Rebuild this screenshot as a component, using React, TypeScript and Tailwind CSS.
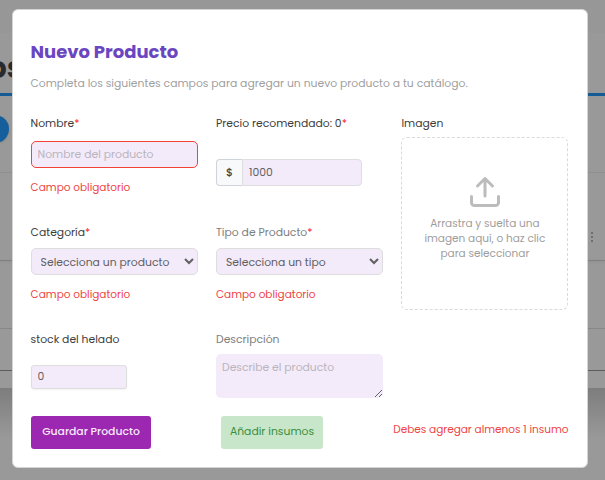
import type { ReactNode } from "react";

function Label({ children, required, className = "text-[#3c3c3c]" }: { children: ReactNode; required?: boolean; className?: string }) {
  return (
    <label className={`block h-[18px] whitespace-nowrap leading-[20px] ${className}`}>
      {children}
      {required && <span className="text-[#ff2020]">*</span>}
    </label>
  );
}

function FieldError() {
  return <p className="h-[18px] whitespace-nowrap text-[10.5px] leading-[20px] text-[#ee4444]">Campo obligatorio</p>;
}

function Backdrop() {
  return (
    <div className="absolute inset-0 bg-[#999999]">
      <div className="absolute inset-x-0 top-0 h-[33px] bg-[#979797]" />
      <div className="absolute -left-[18px] top-[49px] w-[41px] text-right text-[29px] font-bold leading-[38px] text-[#292a2d]">os</div>
      <div className="absolute inset-x-0 top-[93px] h-[3px] bg-[#155b96]" />
      <div className="absolute -left-[19px] top-[115px] size-7 rounded-full bg-[#165f9d] shadow" />
      <div className="absolute inset-x-0 top-[172px] h-px bg-[#8f8f8f]" />
      <div className="absolute inset-x-0 top-[260px] h-px bg-[#808080] shadow" />
      <div className="absolute inset-x-0 top-[328px] h-px bg-[#888888]" />
      <div className="absolute inset-x-0 top-[370px] h-px bg-[#5c5c5c]" />
      <div className="absolute inset-x-0 top-[388px] h-[50px] bg-linear-to-b from-[#7d7d7d] to-[#999999]" />
      <div className="absolute left-[591px] top-[232px] flex flex-col gap-[2px]">
        <i className="size-[2px] bg-[#6e6e6e]" />
        <i className="size-[2px] bg-[#6e6e6e]" />
        <i className="size-[2px] bg-[#6e6e6e]" />
      </div>
    </div>
  );
}

const field = "border bg-[#f3eafa] text-[#606060] outline-none placeholder:text-[#b9b5bd]";

export default function App() {
  return (
    <div className="relative h-[480px] w-[605px] overflow-hidden font-[Poppins,Inter,sans-serif] text-[10.8px]">
      <Backdrop />
      <form className="absolute left-[12px] top-[9px] h-[459px] w-[576px] rounded-[6px] border border-[#d4d4d4] bg-white pl-[18px] pt-[29px]">
        <h1 className="-ml-[0.5px] h-[26px] whitespace-nowrap text-[18px] font-bold leading-[26px] text-[#6b46c1]">Nuevo Producto</h1>
        <p className="-ml-[0.5px] mt-[9px] h-[18px] whitespace-nowrap leading-[20px] text-[#a0a0a0]">
          Completa los siguientes campos para agregar un nuevo producto a tu catálogo.
        </p>
        <div className="-ml-[0.4px] mt-[22px] grid grid-cols-[167px_167px_167px] gap-x-[18.4px]">
          <div className="h-[109px]">
            <Label required>Nombre</Label>
            <input placeholder="Nombre del producto" className={`${field} mt-[9px] block h-[27px] w-full rounded-[5px] border-[#f44336] px-[6px]`} />
            <div className="mt-[10px]"><FieldError /></div>
          </div>
          <div>
            <Label required>Precio recomendado: 0</Label>
            <div className="mt-[27px] flex h-[27px] w-[146px]">
              <span className="flex w-[26px] items-center justify-center rounded-l-[4px] border border-r-0 border-[#ced4da] bg-[#f8f9fa] pt-px font-medium text-[#4d4336]">$</span>
              <input defaultValue="1000" className={`${field} w-[120px] rounded-r-[4px] border-[#dedede] px-[6px] pt-[2px]`} />
            </div>
          </div>
          <div className="row-span-2">
            <Label>Imagen</Label>
            <div className="mt-[5px] flex h-[173px] flex-col items-center rounded-[6px] border border-dashed border-[#dadada] pt-[37px] text-center text-[10.5px] leading-[15px] text-[#9d9d9d]">
              <svg width="32" height="32" viewBox="0 0 32 32" fill="none" stroke="#bcbcbc" strokeWidth="3" strokeLinecap="round" strokeLinejoin="round" className="mb-[9px] shrink-0">
                <path d="M16 21V3.5M8.5 11 16 3.5l7.5 7.5M2.5 21.5v6a3 3 0 0 0 3 3h21a3 3 0 0 0 3-3v-6" />
              </svg>
              <span>Arrastra y suelta una<br />imagen aquí, o haz clic<br />para seleccionar</span>
            </div>
          </div>
          <div className="h-[107px]">
            <Label required>Categoría</Label>
            <select className={`${field} mt-[7px] block h-[27px] w-full rounded-[5px] border-[#dedede] px-[5px] pt-[2px]`}>
              <option>Selecciona un producto</option>
            </select>
            <div className="mt-[10px]"><FieldError /></div>
          </div>
          <div>
            <Label required className="text-[#7d7d7d]">Tipo de Producto</Label>
            <select className={`${field} mt-[7px] block h-[27px] w-full rounded-[5px] border-[#dedede] px-[5px] pt-[2px]`}>
              <option>Selecciona un tipo</option>
            </select>
            <div className="mt-[10px]"><FieldError /></div>
          </div>
          <div className="h-[86px]">
            <Label>stock del helado</Label>
            <input defaultValue="0" className={`${field} mt-[17px] block h-[24px] w-[96px] rounded-[3px] border-[#dedede] px-[6px] shadow-xs`} />
          </div>
          <div>
            <Label className="text-[#7d7d7d]">Descripción</Label>
            <textarea placeholder="Describe el producto" className="mt-[6px] block h-[44px] w-[167px] resize rounded-[5px] bg-[#f3eafa] px-[6px] py-[5px] leading-[17px] outline-none placeholder:text-[#b9b5bd]" />
          </div>
        </div>
        <div className="flex w-[537.5px] items-start">
          <button type="button" className="h-[33px] w-[120px] whitespace-nowrap rounded-[3px] bg-[#9c27b0] pb-px font-medium text-[#f7eaf9]">Guardar Producto</button>
          <button type="button" className="ml-[70px] h-[33px] w-[102px] whitespace-nowrap rounded-[3px] bg-[#c8e6c9] pb-px text-[#388e3c]">Añadir insumos</button>
          <p className="ml-auto mt-[4px] whitespace-nowrap text-[10.5px] leading-[20px] text-[#ee4444]">Debes agregar almenos 1 insumo</p>
        </div>
      </form>
    </div>
  );
}
